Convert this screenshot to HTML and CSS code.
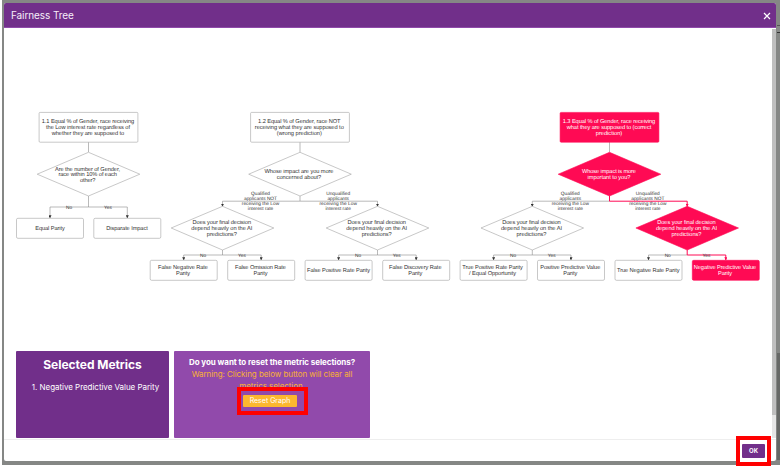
FILE: index.html
```html
<!DOCTYPE html>
<html lang="en">
<head>
<meta charset="utf-8">
<title>Fairness Tree</title>
<link rel="stylesheet" href="styles.css">
</head>
<body>
<div class="backdrop">
  <section class="modal">
    <header class="modal-header">
      <h1>Fairness Tree</h1>
      <svg class="close" viewBox="0 0 8 8"><path d="M1 1L7 7M7 1L1 7"/></svg>
    </header>
    <div class="modal-body">
      <svg class="tree" viewBox="4 28 768 316">
        <defs>
          <marker id="arrow" viewBox="0 0 4 4" refX="3.6" refY="2" markerWidth="3" markerHeight="3" markerUnits="userSpaceOnUse" orient="auto"><path d="M0 0L4 2L0 4z" fill="#333"/></marker>
          <marker id="arrow-hot" viewBox="0 0 4 4" refX="3.6" refY="2" markerWidth="3" markerHeight="3" markerUnits="userSpaceOnUse" orient="auto"><path d="M0 0L4 2L0 4z" fill="#ff0a54"/></marker>
          <rect id="root" x="-49.4" y="112.4" width="98.8" height="29.8" rx="1"/>
          <path id="ask" d="M0 152.3L51.3 174.2L0 196L-51.3 174.2z"/>
          <path id="ask2" d="M0 206.3L51.3 228L0 250L-51.3 228z"/>
          <rect id="leaf" x="-33.5" y="260.3" width="67" height="20" rx="1.4"/>
        </defs>

        <g class="edge">
          <path d="M88.5 142V152M88.5 196V207M300 142V152M300 196V201M609.5 142V152"/>
          <path class="arrow" d="M88.5 207H50V218"/><path class="arrow" d="M88.5 207H127.3V218"/>
          <path class="arrow" d="M300 201.2H222.5V206.5"/><path class="arrow" d="M300 201.2H377.5V206.5"/>
          <path class="arrow" d="M609.5 201.2H532.3V206.5"/>
          <path d="M222.5 250V255M377.5 250V255M532.3 250V255"/>
          <path class="arrow" d="M222.5 255H183.7V260"/><path class="arrow" d="M222.5 255H261.2V260"/>
          <path class="arrow" d="M377.5 255H338.6V260"/><path class="arrow" d="M377.5 255H416.2V260"/>
          <path class="arrow" d="M532.3 255H493.6V260"/><path class="arrow" d="M532.3 255H571V260"/>
          <path class="arrow" d="M687.2 255H648.5V260"/>
          <path class="hot-edge" d="M609.5 196V201.2H687.2V206.5"/>
          <path class="hot-edge" d="M687.2 250V255H725.8V260"/>
        </g>

        <g class="node">
          <use href="#root" x="88.5"/><use href="#ask" x="88.5"/>
          <use href="#leaf" x="50" y="-42"/><use href="#leaf" x="127.3" y="-42"/>
          <use href="#root" x="300"/><use href="#ask" x="300"/>
          <use href="#ask2" x="222.5"/><use href="#ask2" x="377.5"/><use href="#ask2" x="532.3"/>
          <use href="#leaf" x="183.7"/><use href="#leaf" x="261.2"/><use href="#leaf" x="338.6"/>
          <use href="#leaf" x="416.2"/><use href="#leaf" x="493.6"/><use href="#leaf" x="571"/><use href="#leaf" x="648.5"/>
        </g>
        <g class="node hot">
          <use href="#root" x="609.5"/><use href="#ask" x="609.5"/><use href="#ask2" x="687.2"/><use href="#leaf" x="725.8"/>
        </g>

        <g class="label">
          <text x="88" y="123.4" textLength="92.5">1.1 Equal % of Gender, race receiving</text>
          <text x="88" y="129" textLength="84">the Low interest rate regardless of</text>
          <text x="88" y="134.7" textLength="72.5">whether they are supposed to</text>
          <text x="87.5" y="170.5" textLength="65">Are the number of Gender,</text>
          <text x="87.7" y="176" textLength="58.5">race within 10% of each</text>
          <text x="87.7" y="181.7" textLength="15.5">other?</text>
          <text x="50" y="230" textLength="29.5">Equal Parity</text>
          <text x="127" y="230" textLength="41.5">Disparate Impact</text>

          <text x="299.3" y="123.4" textLength="82.5">1.2 Equal % of Gender, race NOT</text>
          <text x="299.3" y="129" textLength="89">receiving what they are supposed to</text>
          <text x="299.3" y="134.7" textLength="45">(wrong prediction)</text>
          <text x="299" y="173.4" textLength="69">Whose impact are you more</text>
          <text x="299" y="179" textLength="44.5">concerned about?</text>

          <text x="221.8" y="224.4" textLength="58.5">Does your final decision</text>
          <text x="221.8" y="230" textLength="61">depend heavily on the AI</text>
          <text x="221.8" y="235.6" textLength="30">predictions?</text>
          <text x="376.7" y="224.4" textLength="58.5">Does your final decision</text>
          <text x="376.7" y="230" textLength="61">depend heavily on the AI</text>
          <text x="376.7" y="235.6" textLength="30">predictions?</text>
          <text x="531.5" y="224.4" textLength="58.5">Does your final decision</text>
          <text x="531.5" y="230" textLength="61">depend heavily on the AI</text>
          <text x="531.5" y="235.6" textLength="30">predictions?</text>

          <text x="183" y="269.3" textLength="50">False Negative Rate</text><text x="183" y="274.8" textLength="14">Parity</text>
          <text x="260.5" y="269.3" textLength="51">False Omission Rate</text><text x="260.5" y="274.8" textLength="14">Parity</text>
          <text x="338.6" y="272.2" textLength="63">False Positive Rate Parity</text>
          <text x="415.3" y="269.3" textLength="52.5">False Discovery Rate</text><text x="415.3" y="274.8" textLength="14">Parity</text>
          <text x="492.6" y="269.3" textLength="60.5">True Positive Rate Parity</text><text x="492.6" y="274.8" textLength="47">/ Equal Opportunity</text>
          <text x="570.3" y="269.3" textLength="60">Positive Predictive Value</text><text x="570.3" y="274.8" textLength="14">Parity</text>
          <text x="648.3" y="272.2" textLength="62.5">True Negative Rate Parity</text>
        </g>

        <g class="label hot-label">
          <text x="609" y="123.4" textLength="92.5">1.3 Equal % of Gender, race receiving</text>
          <text x="609" y="129" textLength="84.5">what they are supposed to (correct</text>
          <text x="609" y="134.7" textLength="26.5">prediction)</text>
          <text x="609" y="173.4" textLength="54">Whose impact is more</text>
          <text x="609" y="179" textLength="43">important to you?</text>
          <text x="686.5" y="224.4" textLength="58.5">Does your final decision</text>
          <text x="686.5" y="230" textLength="61">depend heavily on the AI</text>
          <text x="686.5" y="235.6" textLength="30">predictions?</text>
          <text x="725" y="269.3" textLength="62.5">Negative Predictive Value</text><text x="725" y="274.8" textLength="14">Parity</text>
        </g>

        <g class="edge-label">
          <text x="69" y="208.5">No</text><text x="108" y="208.5">Yes</text>
          <text x="203" y="256.5">No</text><text x="242" y="256.5">Yes</text>
          <text x="358" y="256.5">No</text><text x="396.7" y="256.5">Yes</text>
          <text x="513" y="256.5">No</text><text x="551.7" y="256.5">Yes</text>
          <text x="667.7" y="256.5">No</text><text x="706.5" y="256.5">Yes</text>
          <text x="260.5" y="195.4">Qualified</text><text x="260.5" y="200.2">applicants NOT</text><text x="260.5" y="205">receiving the Low</text><text x="260.5" y="209.7">interest rate</text>
          <text x="338.2" y="195.4">Unqualified</text><text x="338.2" y="200.2">applicants</text><text x="338.2" y="205">receiving the Low</text><text x="338.2" y="209.7">interest rate</text>
          <text x="570.3" y="195.4">Qualified</text><text x="570.3" y="200.2">applicants</text><text x="570.3" y="205">receiving the Low</text><text x="570.3" y="209.7">interest rate</text>
          <text x="647.8" y="195.4">Unqualified</text><text x="647.8" y="200.2">applicants NOT</text><text x="647.8" y="205">receiving the Low</text><text x="647.8" y="209.7">interest rate</text>
        </g>
      </svg>
      <div class="panels">
        <div class="panel metrics">
          <h2>Selected Metrics</h2>
          <p>1. Negative Predictive Value Parity</p>
        </div>
        <div class="panel reset">
          <h3>Do you want to reset the metric selections?</h3>
          <p>Warning: Clicking below button will clear all<br>metrics selection.</p>
          <div class="callout reset-callout"><button class="reset-button">Reset Graph</button></div>
        </div>
      </div>
      <div class="scrollbar"></div>
    </div>
    <footer class="modal-footer">
      <div class="callout ok-callout"><button class="ok-button">OK</button></div>
    </footer>
  </section>
  <div class="page-edge"></div>
</div>
</body>
</html>
```
FILE: styles.css
```css
* { box-sizing: border-box; }
body { margin: 0; width: 780px; height: 468px; overflow: hidden; background: #fff; font-family: Inter, sans-serif; }
h1, h2, h3, p { margin: 0; }
button { border: 0; padding: 0; font-family: inherit; color: #fff; }

.backdrop { position: relative; height: 465px; margin-left: 2px; padding: 3px 4px 4px 2px; background: #858785; }
.page-edge { position: absolute; right: 0; top: 25px; width: 3px; height: 435px; background: linear-gradient(#555 0 1px, #898b89 1px 7px, #333 7px 8px, #858785 8px 328px, #666866 328px); }

.modal { display: flex; flex-direction: column; height: 458px; background: #fff; border-radius: 2px; }
.modal-header { display: flex; align-items: center; justify-content: space-between; height: 25px; padding: 0 5px 0 7px; background: #712f8a; border-bottom: 1px solid #8f4aaa; border-radius: 2px 2px 0 0; }
.modal-header h1 { color: #f6eef9; font-size: 10px; font-weight: 400; line-height: 24px; letter-spacing: -0.09px; }
.close { width: 8px; height: 8px; margin-top: 2px; fill: none; stroke: #fff; stroke-width: 1.2; }

.modal-body { position: relative; flex: none; height: 411px; }
.scrollbar { position: absolute; top: 1px; right: 0; width: 4px; height: 409px; background: linear-gradient(#bfbfbf 0 386px, #e6e6e6 386px); }
.tree { display: block; width: 768px; height: 316px; }
.node { fill: #fff; stroke: #a3a3a3; stroke-width: 0.6; }
.hot { fill: #ff0a54; stroke: #ff0a54; }
.edge { fill: none; stroke: #8c8c8c; stroke-width: 0.6; }
.arrow { marker-end: url(#arrow); }
.hot-edge { stroke: #ff0a54; stroke-width: 1; marker-end: url(#arrow-hot); }
.label, .edge-label { font-family: "Liberation Sans", Arial, sans-serif; text-anchor: middle; text-rendering: geometricPrecision; }
.label { font-size: 5.7px; fill: #333; }
.hot-label { fill: #fff; }
.edge-label { font-size: 4.8px; fill: #333; }

.panels { display: flex; gap: 5px; margin-top: 7px; padding-left: 12px; }
.panel { height: 87px; border-radius: 1px; text-align: center; color: #fff; }
.metrics { width: 153px; padding-top: 6px; background: #712f8a; }
.metrics h2 { font-size: 12px; font-weight: 700; line-height: 16px; letter-spacing: -0.04px; }
.metrics p { margin: 7px 0 0 6px; font-size: 8px; line-height: 14px; letter-spacing: -0.04px; white-space: nowrap; }
.reset { width: 196px; padding-top: 5px; background: #914aab; }
.reset h3 { font-size: 8px; font-weight: 700; line-height: 12px; letter-spacing: -0.05px; white-space: nowrap; }
.reset p { font-size: 8px; line-height: 12px; letter-spacing: -0.07px; color: #f9b233; white-space: nowrap; }
.callout { position: relative; display: flex; align-items: center; border: 4px solid #f00; }
.reset-callout { width: 71px; height: 28px; margin: -5px 0 0 63px; padding-left: 2px; background: #914aab; }
.reset-button { width: 54px; height: 12px; border-radius: 1px; background: #fdb72f; font-size: 7px; line-height: 12px; }

.modal-footer { position: relative; flex: none; display: flex; justify-content: flex-end; height: 22px; border-top: 1px solid #eee; }
.ok-callout { flex: none; justify-content: center; width: 35px; height: 30px; margin: -4px 5px 0 0; background: #fff; }
.ok-button { width: 23px; height: 14px; border-radius: 1px; background: #712f8a; font-size: 6px; font-weight: 700; line-height: 14px; }
```
